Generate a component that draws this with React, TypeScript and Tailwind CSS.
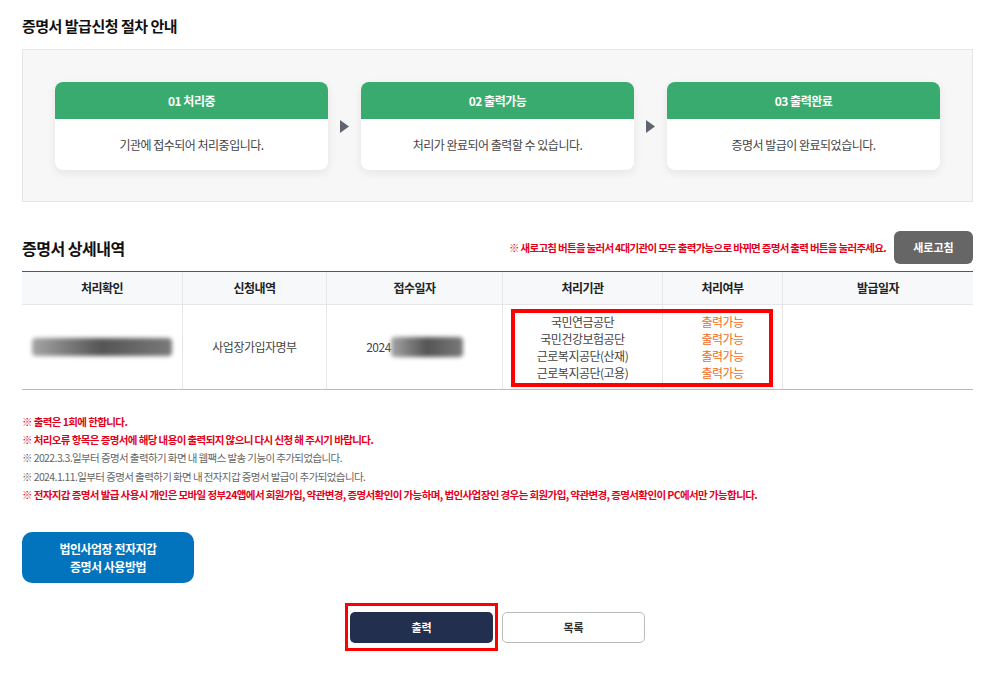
import React from 'react';

const steps = [
  { title: '01 처리중', desc: '기관에 접수되어 처리중입니다.' },
  { title: '02 출력가능', desc: '처리가 완료되어 출력할 수 있습니다.' },
  { title: '03 출력완료', desc: '증명서 발급이 완료되었습니다.' },
];

const agencies = ['국민연금공단', '국민건강보험공단', '근로복지공단(산재)', '근로복지공단(고용)'];

const notes = [
  { text: '※  출력은 1회에 한합니다.', red: true },
  { text: '※  처리오류 항목은 증명서에 해당 내용이 출력되지 않으니 다시 신청 해 주시기 바랍니다.', red: true },
  { text: '※  2022.3.3.일부터 증명서 출력하기 화면 내 웹팩스 발송 기능이 추가되었습니다.', red: false },
  { text: '※  2024.1.11.일부터 증명서 출력하기 화면 내 전자지갑 증명서 발급이 추가되었습니다.', red: false },
  {
    text: '※  전자지갑 증명서 발급 사용시 개인은 모바일 정부24앱에서 회원가입, 약관변경, 증명서확인이 가능하며, 법인사업장인 경우는 회원가입, 약관변경, 증명서확인이 PC에서만 가능합니다.',
    red: true,
  },
];

const Arrow = () => (
  <svg width="9" height="13" viewBox="0 0 9 13" className="shrink-0">
    <path d="M0 0 L9 6.5 L0 13 Z" fill="#5f6670" />
  </svg>
);

const Blur = ({ className }: { className: string }) => (
  <div className={`blur-[2px] rounded-sm bg-gradient-to-r from-[#a5a5a5] via-[#555] to-[#7a7a7a] ${className}`} />
);

export default function App() {
  return (
    <div className="w-[995px] min-h-[674px] bg-white px-[22px] pt-[16px] pb-[20px] text-[#333]" style={{ fontFamily: '"Noto Sans CJK KR", "Noto Sans", sans-serif' }}>
      {/* 절차 안내 */}
      <h2 className="text-[15px] font-bold leading-[20px] tracking-[-0.5px] text-[#111]">증명서 발급신청 절차 안내</h2>
      <div className="mt-[13px] border border-[#e5e5e5] bg-[#f7f7f7] px-[32px] pt-[32px] pb-[31px]">
        <div className="flex items-center justify-between">
          {steps.map((s, i) => (
            <React.Fragment key={s.title}>
              {i > 0 && <Arrow />}
              <div className="w-[273px] overflow-hidden rounded-[8px] bg-white shadow-[0_3px_10px_rgba(0,0,0,0.08)]">
                <div className="flex h-[37px] items-center justify-center bg-[#3aab6e] text-[12px] font-bold tracking-[-0.5px] text-white">{s.title}</div>
                <div className="flex h-[51px] items-center justify-center text-[12px] tracking-[-0.5px] text-[#444]">{s.desc}</div>
              </div>
            </React.Fragment>
          ))}
        </div>
      </div>

      {/* 상세내역 */}
      <div className="mt-[29px] flex items-center">
        <h2 className="text-[16px] font-bold leading-[20px] tracking-[-0.5px] text-[#111]">증명서 상세내역</h2>
        <p className="ml-auto mr-[8px] text-[10.5px] font-bold tracking-[-0.7px] text-[#e3001b]">※ 새로고침 버튼을 눌러서 4대기관이 모두 출력가능으로 바뀌면 증명서 출력 버튼을 눌러주세요.</p>
        <button className="h-[33px] w-[79px] rounded-[6px] bg-[#666] text-[11px] font-bold text-white">새로고침</button>
      </div>

      <div className="mt-[7px] border-t border-[#555]">
        <div className="grid h-[33px] grid-cols-[160px_144px_176px_160px_120px_1fr] border-b border-[#e6e6e6] bg-[#f7f8fa] text-[12px] font-bold tracking-[-0.5px] text-[#222]">
          {['처리확인', '신청내역', '접수일자', '처리기관', '처리여부', '발급일자'].map((h, i) => (
            <div key={h} className={`flex items-center justify-center ${i > 0 ? 'border-l border-[#e6e6e6]' : ''}`}>{h}</div>
          ))}
        </div>
        <div className="relative grid h-[85px] grid-cols-[160px_144px_176px_160px_120px_1fr] border-b border-[#bbb] text-[12px] tracking-[-0.5px] text-[#444]">
          <div className="flex items-center justify-center">
            <Blur className="h-[18px] w-[140px]" />
          </div>
          <div className="flex items-center justify-center border-l border-[#e6e6e6]">사업장가입자명부</div>
          <div className="flex items-center justify-center border-l border-[#e6e6e6]">
            <span>2024</span>
            <Blur className="h-[20px] w-[72px]" />
          </div>
          <div className="flex flex-col items-center justify-center border-l border-[#e6e6e6] leading-[17px]">
            {agencies.map((a) => (
              <span key={a}>{a}</span>
            ))}
          </div>
          <div className="flex flex-col items-center justify-center border-l border-[#e6e6e6] leading-[17px] text-[#f26a22]">
            {agencies.map((a) => (
              <span key={a}>출력가능</span>
            ))}
          </div>
          <div className="border-l border-[#e6e6e6]" />
          {/* 강조 표시 */}
          <div className="pointer-events-none absolute left-[489px] top-[4px] h-[78px] w-[262px] border-[4px] border-[#ff0000]" />
        </div>
      </div>

      {/* 안내 문구 */}
      <ul className="mt-[23px] text-[10.5px] leading-[18.2px] tracking-[-0.6px]">
        {notes.map((n) => (
          <li key={n.text} className={n.red ? 'font-bold text-[#e3001b]' : 'text-[#666]'}>{n.text}</li>
        ))}
      </ul>

      <button className="mt-[28px] flex h-[51px] w-[172px] flex-col items-center justify-center rounded-[10px] bg-[#0274bd] text-[12px] font-bold leading-[18px] tracking-[-0.5px] text-white">
        <span>법인사업장 전자지갑</span>
        <span>증명서 사용방법</span>
      </button>

      <div className="mt-[29px] flex justify-center gap-[9px]">
        <div className="relative">
          <button className="h-[31px] w-[143px] rounded-[5px] bg-[#232f4f] text-[11px] font-bold text-white">출력</button>
          <div className="pointer-events-none absolute -left-[5px] -right-[5px] -top-[9px] -bottom-[8px] border-[3px] border-[#ff0000]" />
        </div>
        <button className="h-[31px] w-[143px] rounded-[5px] border border-[#bbb] bg-white text-[11px] font-bold text-[#333]">목록</button>
      </div>
    </div>
  );
}
